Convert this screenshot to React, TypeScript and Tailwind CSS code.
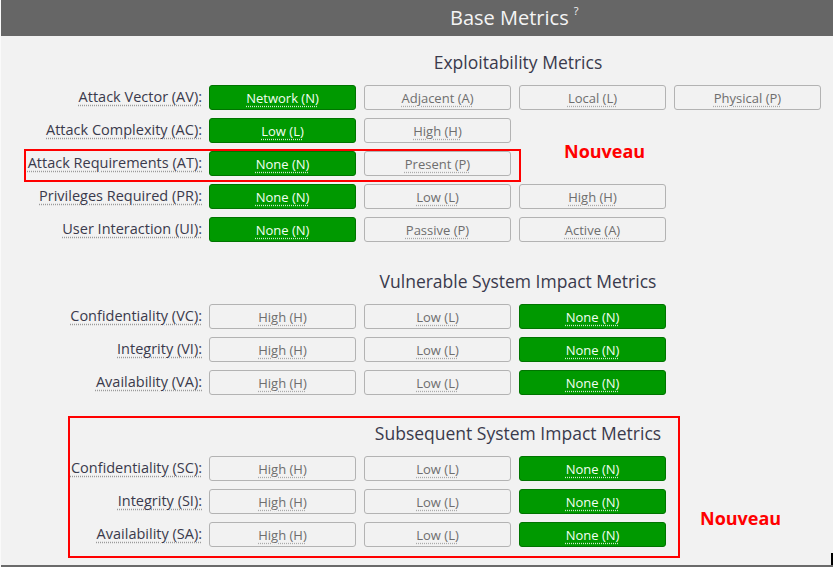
import React from "react";

type Row = { label: string; options: string[]; selected: number };

const exploit: Row[] = [
  { label: "Attack Vector (AV):", options: ["Network (N)", "Adjacent (A)", "Local (L)", "Physical (P)"], selected: 0 },
  { label: "Attack Complexity (AC):", options: ["Low (L)", "High (H)"], selected: 0 },
  { label: "Attack Requirements (AT):", options: ["None (N)", "Present (P)"], selected: 0 },
  { label: "Privileges Required (PR):", options: ["None (N)", "Low (L)", "High (H)"], selected: 0 },
  { label: "User Interaction (UI):", options: ["None (N)", "Passive (P)", "Active (A)"], selected: 0 },
];

const vuln: Row[] = [
  { label: "Confidentiality (VC):", options: ["High (H)", "Low (L)", "None (N)"], selected: 2 },
  { label: "Integrity (VI):", options: ["High (H)", "Low (L)", "None (N)"], selected: 2 },
  { label: "Availability (VA):", options: ["High (H)", "Low (L)", "None (N)"], selected: 2 },
];

const subs: Row[] = [
  { label: "Confidentiality (SC):", options: ["High (H)", "Low (L)", "None (N)"], selected: 2 },
  { label: "Integrity (SI):", options: ["High (H)", "Low (L)", "None (N)"], selected: 2 },
  { label: "Availability (SA):", options: ["High (H)", "Low (L)", "None (N)"], selected: 2 },
];

function MetricRow({ row }: { row: Row }) {
  return (
    <div className="flex items-center h-[25px]">
      <div className="w-[202px] shrink-0 pr-[1px] text-right text-[14.5px] text-[#3a3a4c] -mt-[2px]">
        <span className="underline decoration-dotted decoration-[#9a9a9a] underline-offset-[3px]">{row.label}</span>
      </div>
      <div className="flex gap-[8px] ml-[6px]">
        {row.options.map((o, i) =>
          i === row.selected ? (
            <div
              key={o}
              className="w-[147px] h-[25px] rounded-[3px] bg-[#009900] border border-[#007400] flex items-center justify-center text-[13px] text-[#f2fff2]"
            >
              <span className="underline decoration-dotted decoration-[#cfe9cf] underline-offset-[3px] mt-[2px]">{o}</span>
            </div>
          ) : (
            <div
              key={o}
              className="w-[147px] h-[25px] rounded-[3px] bg-[#f2f2f2] border border-[#b3b3b3] flex items-center justify-center text-[13px] text-[#6e6e6e]"
            >
              <span className="underline decoration-dotted decoration-[#aaaaaa] underline-offset-[3px] mt-[2px]">{o}</span>
            </div>
          )
        )}
      </div>
    </div>
  );
}

function Section({ title, rows, top }: { title: string; rows: Row[]; top: string }) {
  return (
    <div className={top}>
      <div className="flex pl-[208px] w-[826px] h-[24px] items-center">
        <div className="flex-1 text-center text-[17.5px] text-[#3a3a4c] leading-[24px]">{title}</div>
      </div>
      <div className="flex flex-col gap-[8px] mt-[11px]">
        {rows.map((r) => (
          <MetricRow key={r.label} row={r} />
        ))}
      </div>
    </div>
  );
}

export default function App() {
  return (
    <div
      className="relative w-[833px] h-[567px] bg-[#f2f2f2] border-l border-l-[#fafafa] overflow-hidden"
      style={{ fontFamily: '"Open Sans", "Noto Sans", sans-serif' }}
    >
      <div className="h-[36px] bg-[#666666] flex items-center pl-[449px] text-[#f4f4f4]">
        <span className="text-[20px] leading-[36px]">Base Metrics</span>
        <span className="text-[11px] ml-[5px] -mt-[14px]">?</span>
      </div>

      <Section title="Exploitability Metrics" rows={exploit} top="mt-[14px]" />
      <Section title="Vulnerable System Impact Metrics" rows={vuln} top="mt-[27px]" />
      <Section title="Subsequent System Impact Metrics" rows={subs} top="mt-[26px]" />

      <div className="absolute left-0 right-0 bottom-0 h-[2px] bg-[#6a6a6a]" />
      <div className="absolute right-0 bottom-[2px] w-[2px] h-[12px] bg-black" />

      <div className="absolute left-[23px] top-[149px] w-[497px] h-[33px] border-2 border-[#ff0000]" />
      <div className="absolute left-[563px] top-[138px] text-[18px] font-bold text-[#ff0000]">Nouveau</div>

      <div className="absolute left-[67px] top-[416px] w-[612px] h-[142px] border-2 border-[#ff0000]" />
      <div className="absolute left-[699px] top-[505px] text-[18px] font-bold text-[#ff0000]">Nouveau</div>
    </div>
  );
}
